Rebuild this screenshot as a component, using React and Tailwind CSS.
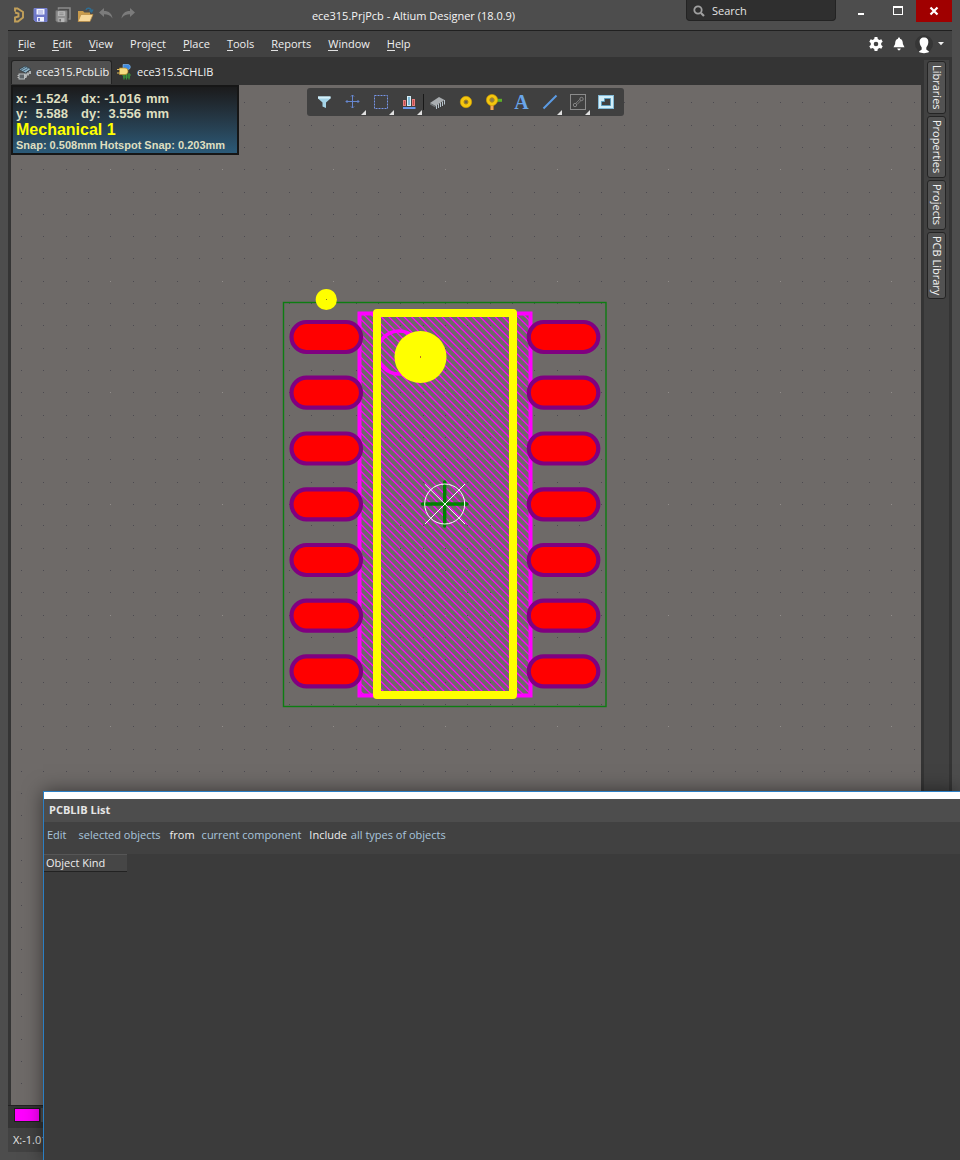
import React from "react";

const GRID = 22.32;
const ORIGIN_X = 445;
const ORIGIN_Y = 504;

const gridDots = [];
for (let r = -18; r <= 36; r++) {
  for (let c = -19; c <= 60; c++) {
    gridDots.push({
      x: Math.round(ORIGIN_X + c * GRID),
      y: Math.round(ORIGIN_Y + r * GRID) + (r > 0 ? -1 : 0),
      major: r % 5 === 0 && c % 5 === 0,
    });
  }
}

const hatchLines = [];
for (let i = 0; i < 76; i++) {
  const x = -346 + i * 7.6;
  hatchLines.push(`M${(x + 312).toFixed(1)} 312 L${(x + 697).toFixed(1)} 697`);
}

const padRows = [337, 392.7, 448.5, 504.3, 560, 615.7, 671.3];

function Footprint() {
  return (
    <svg className="block h-full w-full" role="img" aria-label="Footprint">
      <defs>
        <clipPath id="body">
          <rect x="359.5" y="313.5" width="171" height="382" />
        </clipPath>
      </defs>
      <g transform="translate(-11 -85)">
        <path d={hatchLines.join(" ")} clipPath="url(#body)" stroke="#ff00ff" strokeWidth="1.3" />
        <rect x="359.5" y="313.5" width="171" height="382" fill="none" stroke="#ff00ff" strokeWidth="4" />
        <circle cx="399" cy="352.5" r="21.5" fill="none" stroke="#ff00ff" strokeWidth="3.5" />
        <g shapeRendering="crispEdges">
          {gridDots.map((d) => (
            <rect key={d.x + "-" + d.y} x={d.x} y={d.y} width="1" height="1" fill={d.major ? "#918d8a" : "#4c4a50"} />
          ))}
        </g>
        <rect x="283.5" y="302.5" width="322.5" height="404" fill="none" stroke="#0d7d12" strokeWidth="1.4" />
        {padRows.map((y) => (
          <g key={y} fill="#ff0000" stroke="#800080" strokeWidth="4.2">
            <rect x="291.5" y={y - 15} width="69.5" height="30" rx="15" />
            <rect x="528.800" y={y - 15} width="69.5" height="30" rx="15" />
          </g>
        ))}
        <rect x="377" y="313" width="136" height="382" fill="none" stroke="#ffff00" strokeWidth="8" strokeLinejoin="round" />
        <circle cx="420.5" cy="357" r="26" fill="#ffff00" />
        <rect x="420" y="356" width="1" height="2" fill="#c07020" />
        <circle cx="326.3" cy="299.5" r="10.6" fill="#ffff00" />
        <rect x="326" y="299" width="1" height="1" fill="#807020" />
        <path d="M422.5 504 H467 M444.7 482 V526" stroke="#008000" strokeWidth="3.4" strokeLinecap="round" />
        <g fill="none" stroke="#ffffff" strokeWidth="1">
          <circle cx="444.7" cy="504" r="20" />
          <path d="M425 484.300 L465 524 M465 484 L425 524" />
        </g>
      </g>
    </svg>
  );
}

const menus = [
  ["", "F", "ile"],
  ["", "E", "dit"],
  ["", "V", "iew"],
  ["Proje", "c", "t"],
  ["", "P", "lace"],
  ["", "T", "ools"],
  ["", "R", "eports"],
  ["", "W", "indow"],
  ["", "H", "elp"],
];

function Floppy({ body, edge, label }) {
  return (
    <g>
      <path d="M1 1.500 H14 V14.500 H2.500 L1 13 Z" fill={body} stroke={edge} />
      <rect x="3.500" y="2" width="8" height="5.500" fill={label} />
      <path d="M5 4 H10 M5 6 H10" stroke={edge} strokeWidth=".7" />
      <rect x="4" y="10" width="7" height="4.500" fill={label} />
      <rect x="5" y="11" width="2" height="3" fill={edge} />
    </g>
  );
}

const quick = [
  {
    label: "DXP",
    icon: (
      <path d="M4 4.500 V1.500 H6.500 L12 5 V10.500 L7 14.500 H4 V10.500 L7.500 9.500 V6.500 L4 5.500" fill="none" stroke="#c2a05a" strokeWidth="1.900" />
    ),
  },
  { label: "Save", icon: <Floppy body="#6f78c9" edge="#7780cc" label="#f1f3ff" /> },
  {
    label: "Save All",
    icon: (
      <g>
        <path d="M3.500 2.500 V1 H15 V12 H13.500" fill="none" stroke="#8a8a8a" strokeWidth="1.500" />
        <g transform="translate(0 2.500) scale(.86)"><Floppy body="#909090" edge="#707070" label="#b8b8b8" /></g>
      </g>
    ),
  },
  {
    label: "Open",
    icon: (
      <g>
        <path d="M1 14 V4 H6 L7.500 5.500 H13 V14 Z" fill="#c99b4c" />
        <path d="M1 14.500 L4 7.500 H16 L13 14.500 Z" fill="#f6d79a" stroke="#b98b42" strokeWidth=".7" />
        <path d="M9 3 C10 0 14 1 14.500 4 M12.500 3.500 L14.600 5 L16 2.500" fill="none" stroke="#2f6d93" strokeWidth="1.400" />
      </g>
    ),
  },
  {
    label: "Undo",
    icon: <path d="M0 5.500 L5 1 V4 C10 4 13 6.500 13.500 11.500 C11.500 8.500 9 7.300 5 7.300 V10 Z" fill="#7b7b7b" />,
  },
  {
    label: "Redo",
    icon: <path d="M14 5.500 L9 1 V4 C4 4 1 6.500 .5 11.500 C2.500 8.500 5 7.300 9 7.300 V10 Z" fill="#7b7b7b" />,
  },
];

const tools = [
  {
    label: "Filter",
    icon: <g><path d="M1 2.500 H13.500 V4.500 L9 8.500 V14 L5.500 12.500 V8.500 L1 4.500 Z" fill="#a5d4e8" /><path d="M1 2.500 H13.500 V4.500 H1 Z" fill="#d4f0fa" /></g>,
  },
  {
    label: "Snap",
    more: true,
    icon: <path d="M7.500 1 V14 M1 7.500 H14 M6 2.500 L7.500 1 L9 2.500 M6 12.500 L7.500 14 L9 12.500 M2.500 6 L1 7.500 L2.500 9 M12.500 6 L14 7.500 L12.500 9" fill="none" stroke="#6787d0" strokeWidth="1" />,
  },
  {
    label: "Select",
    more: true,
    icon: <rect x="1.500" y="1.500" width="13" height="13" fill="none" stroke="#7795e6" strokeDasharray="2 1" strokeWidth="1" />,
  },
  {
    label: "Align",
    more: true,
    icon: (
      <g>
        <rect x="2.500" y="6.500" width="2" height="5" fill="#c54a4a" stroke="#e57f7f" strokeWidth="1" />
        <rect x="6.500" y="2.500" width="3" height="9" fill="#7fb9d6" stroke="#d7eff8" strokeWidth="1" />
        <rect x="11.500" y="5.500" width="2" height="6" fill="#c54a4a" stroke="#e57f7f" strokeWidth="1" />
        <path d="M2 14 H14.500" stroke="#6b98ea" strokeWidth="2" />
      </g>
    ),
  },
  {
    label: "Component",
    icon: (
      <g>
        <path d="M1 9 L10 3 L15.500 6 L6.500 12 Z" fill="#a9adb0" />
        <path d="M1 9 L6.500 12 V13.500 L1 10.500 Z" fill="#74787b" />
        <path d="M7.500 11 V15 M9.500 10 V14 M11.500 8.500 V13 M13.500 7.500 V12 M15.500 6 V10.500" stroke="#b7c3cb" strokeWidth="1" />
      </g>
    ),
  },
  {
    label: "Pad",
    icon: <g><circle cx="9" cy="8" r="5.700" fill="#f5c70e" stroke="#d3a000" strokeWidth=".6" /><circle cx="9" cy="8" r="2" fill="#6b6048" stroke="#a88417" /></g>,
  },
  {
    label: "Via",
    icon: (
      <g>
        <path d="M7 8 V16" stroke="#e48b28" strokeWidth="3.400" />
        <path d="M7 9 V16" stroke="#f7c489" strokeWidth="1" />
        <path d="M10 6.300 H17" stroke="#5eb026" strokeWidth="3" />
        <circle cx="7" cy="6" r="5.600" fill="#f5c70e" stroke="#d3a000" strokeWidth=".6" />
        <circle cx="7" cy="6" r="2.200" fill="#8c7b4c" stroke="#b08c1c" />
      </g>
    ),
  },
  { label: "String", glyph: "A" },
  { label: "Line", more: true, icon: <path d="M2.500 14.500 L15.500 1.500" stroke="#5b9be4" strokeWidth="2" /> },
  {
    label: "Dimension",
    more: true,
    icon: (
      <g fill="none" stroke="#8b8b8b" transform="translate(1 0)">
        <rect x=".5" y=".5" width="15" height="15" />
        <circle cx="5" cy="11" r="1.700" strokeWidth=".9" />
        <circle cx="11.500" cy="5" r="1.700" strokeWidth=".9" />
        <path d="M5.800 9.300 L9.800 5.300 M7 10.500 L11 6.500" strokeWidth=".8" />
      </g>
    ),
  },
  {
    label: "Region",
    icon: (
      <g transform="translate(1 0)">
        <rect x="0" y="1" width="16" height="14" fill="#d2effa" />
        <rect x="0.500" y="1.500" width="15" height="13" fill="none" stroke="#82b9d6" />
        <path d="M3.500 11.500 V7.500 H6.500 V4.500 H12.500 V11.500 Z" fill="#404040" stroke="#5c9dbf" />
      </g>
    ),
  },
];

const panels = [
  { name: "Libraries", h: "h-[53px]" },
  { name: "Properties", h: "h-[62px]" },
  { name: "Projects", h: "h-[50px]" },
  { name: "PCB Library", h: "h-[67px]" },
];

function TitleBar() {
  return (
    <header className="flex h-[30px] shrink-0 items-start pr-2 pl-[11px]">
      <div className="flex h-[30px] items-center gap-[6px]">
        {quick.map((q) => (
          <button key={q.label} aria-label={q.label} className="h-4 w-4">
            <svg viewBox="0 0 16 16" className="h-4 w-4 overflow-visible">{q.icon}</svg>
          </button>
        ))}
      </div>
      <h1 className="flex-1 pt-1.5 pl-1 text-center text-[11px] leading-5 text-[#f5f5f5]">ece315.PrjPcb - Altium Designer (18.0.9)</h1>
      <label className="flex h-[21px] w-[150px] items-center gap-[7px] rounded-b-[4px] border border-t-0 border-[#232323] bg-[#2f2f2f] pt-px pl-[6px]">
        <svg viewBox="0 0 12 12" className="h-3 w-3 shrink-0">
          <circle cx="5" cy="5" r="3.700" fill="none" stroke="#a0a0a0" strokeWidth="1.800" />
          <path d="M8 8 L11 11" stroke="#a0a0a0" strokeWidth="2.200" />
        </svg>
        <input aria-label="Search" placeholder="Search" className="w-full min-w-0 bg-transparent text-[11px] leading-4 text-white outline-none placeholder:text-[#e4e4e4]" />
      </label>
      <div className="ml-[7px] flex">
        <button aria-label="Minimize" className="flex h-[22px] w-9 items-center justify-center">
          <svg viewBox="0 0 12 12" className="h-3 w-3"><rect x="3" y="8" width="6" height="2" fill="#fff" /></svg>
        </button>
        <button aria-label="Maximize" className="flex h-[22px] w-[37px] items-center justify-center">
          <svg viewBox="0 0 12 12" className="h-3 w-3" shapeRendering="crispEdges"><path d="M1 1 H11 V10 H1 Z M2 3 V9 H10 V3 Z" fill="#fff" fillRule="evenodd" /></svg>
        </button>
        <button aria-label="Close" className="flex h-[22px] w-9 items-center justify-center bg-[#a00000]">
          <svg viewBox="0 0 12 12" className="h-3 w-3"><path d="M2.500 2.500 L9.500 9.500 M9.500 2.500 L2.500 9.500" stroke="#fff" strokeWidth="2.200" /></svg>
        </button>
      </div>
    </header>
  );
}

function MenuBar() {
  return (
    <nav className="flex h-[27px] shrink-0 items-center border-t border-[#202020] bg-[#424242] pr-2 pl-[10px]">
      <div className="flex flex-1 gap-[17px] text-[11px] leading-4 text-[#f0f0f0]">
        {menus.map(([a, b, c]) => (
          <button key={a + b + c}>{a}<span className="inline-block border-b border-[#e0e0e0] leading-[13px]">{b}</span>{c}</button>
        ))}
      </div>
      <div className="flex items-center">
        <button aria-label="Settings" className="mr-[9px]">
          <svg viewBox="0 0 14 14" className="h-[14px] w-[14px]">
            <path d="M5.600 0 H8.400 L8.800 2 L10.400 2.900 L12.300 2.200 L13.700 4.700 L12.200 6 V8 L13.700 9.300 L12.300 11.800 L10.400 11.100 L8.800 12 L8.400 14 H5.600 L5.200 12 L3.600 11.100 L1.700 11.800 L.3 9.300 L1.800 8 V6 L.3 4.700 L1.700 2.200 L3.600 2.900 L5.200 2 Z M7 4.700 A2.300 2.300 0 1 0 7 9.300 A2.300 2.300 0 1 0 7 4.700 Z" fill="#fff" fillRule="evenodd" />
          </svg>
        </button>
        <button aria-label="Notifications" className="mr-[9px]">
          <svg viewBox="0 0 14 14" className="h-[14px] w-[14px]">
            <path d="M7 .5 C7.800 .5 8 1 8 1.700 C10.500 2.500 10.800 4.500 10.900 7 L12.500 10.300 H1.500 L3.100 7 C3.200 4.500 3.500 2.500 6 1.700 C6 1 6.200 .5 7 .5 Z M5.200 11.500 H8.800 L7.900 13.300 H6.100 Z" fill="#fff" />
          </svg>
        </button>
        <button aria-label="Account" className="flex items-center gap-[5px]">
          <svg viewBox="0 0 18 18" className="h-[18px] w-[18px] overflow-visible">
            <circle cx="9" cy="9" r="9" fill="#363636" />
            <path transform="translate(.5 0)" d="M8.500 2.500 C11.500 2.500 13.200 4.500 12.800 7.500 C12.600 10 11.500 11 10.800 12.500 V14.500 C12 15.500 13.500 15.800 13.500 17 C11 18.500 6 18.500 3.500 17 C3.500 15.800 5 15.500 6.200 14.500 V12.500 C5.500 11 4.400 10 4.200 7.500 C3.800 4.500 5.500 2.500 8.500 2.500 Z" fill="#fff" />
          </svg>
          <svg viewBox="0 0 6 4" className="h-1 w-[6px]"><path d="M0 0 H6 L3 3.300 Z" fill="#f0f0f0" /></svg>
        </button>
      </div>
    </nav>
  );
}

function DocumentTabs() {
  return (
    <div role="tablist" className="flex h-7 shrink-0 items-end pl-[3px] text-[11px] text-[#f2f2f2]">
      <button role="tab" aria-selected="true" className="mb-px flex h-6 w-[101px] items-center gap-[3px] rounded-t-[3px] border border-b-0 border-[#232323] bg-[#505050] pl-[5px]">
        <svg viewBox="0 0 16 16" className="h-4 w-4 shrink-0">
          <path d="M2 4.500 L8 1 L14 4 L8.500 8 Z" fill="#8fb4c8" stroke="#2c3a42" strokeWidth=".8" />
          <path d="M4 5 L9.500 2 M6 6.300 L11.500 3.200" stroke="#466274" />
          <path d="M9 8.500 V12 M11 7.500 V10.500 M13 6 V9" stroke="#e8eef1" strokeWidth="1.200" fill="none" />
          <rect x="2" y="9" width="5.500" height="5" fill="#5e6468" stroke="#c3c9cc" strokeWidth=".9" />
          <path d="M.5 10.500 H2 M.5 12.500 H2 M8 10.500 H9.500 M8 12.500 H9.500" stroke="#bbb" />
        </svg>
        <span>ece315.PcbLib</span>
      </button>
      <button role="tab" aria-selected="false" className="mb-px flex h-6 items-center gap-1 pl-[5px]">
        <svg viewBox="0 0 16 16" className="h-4 w-4 shrink-0">
          <path d="M6 .5 H11 C14 .5 14 5.500 11 5.500 H6 Z" fill="#3e8be0" stroke="#8dc3f5" strokeWidth=".6" />
          <path d="M5 11 H14 M6 13 H13 M7 9.500 V15.500 M9.500 9 V15.500 M12 9 V15.500" stroke="#39963b" strokeWidth="1.200" />
          <path d="M2.500 4 H8 C12 4 12 10.500 8 10.500 H2.500 Z" fill="#f6dc80" stroke="#b78a28" strokeWidth=".7" />
          <path d="M0 5.500 H3 M0 9 H3" stroke="#d8b65a" />
        </svg>
        <span>ece315.SCHLIB</span>
      </button>
    </div>
  );
}

function HeadsUp() {
  return (
    <div className="absolute top-0 left-0 h-[70px] w-[228px] border-2 border-[#161616] bg-gradient-to-b from-[#1b1b1c] to-[#2b5a78] pt-1 pl-[3px] font-['Liberation_Sans',Arial,sans-serif] font-bold text-[#dfdfc0]">
      <div className="grid grid-cols-[14px_38px_32px_41px_auto] text-[13px] leading-[15px]">
        <span>x:</span>
        <span className="text-right">-1.524</span>
        <span className="pl-[13px]">dx:</span>
        <span className="text-right">-1.016</span>
        <span className="pl-[5px]">mm</span>
        <span>y:</span>
        <span className="text-right">5.588</span>
        <span className="pl-[13px]">dy:</span>
        <span className="text-right">3.556</span>
        <span className="pl-[5px]">mm</span>
      </div>
      <div className="text-[16px] leading-[17px] text-[#ffff00]">Mechanical 1</div>
      <div className="text-[11px] leading-[14px] whitespace-nowrap">Snap: 0.508mm Hotspot Snap: 0.203mm</div>
    </div>
  );
}

function ActiveBar() {
  return (
    <div role="toolbar" className="absolute top-[3px] left-[296px] flex h-7 w-[317px] rounded-[3px] bg-[#404040] pl-1">
      {tools.map((t) => (
        <button key={t.label} aria-label={t.label} className="relative flex h-7 w-7 items-center justify-center">
          {t.label === "Component" && <span className="absolute top-[6px] left-0 h-4 w-px bg-[#181818]" />}
          {t.glyph ? (
            <span className="pl-px font-['Liberation_Serif',serif] text-[20px] leading-5 font-bold text-[#69a5ea]">{t.glyph}</span>
          ) : (
            <svg viewBox="0 0 16 16" className="h-4 w-4 overflow-visible">{t.icon}</svg>
          )}
          {t.more && (
            <svg viewBox="0 0 5 5" className="absolute right-px bottom-px h-[5px] w-[5px]"><path d="M5 0 V5 H0 Z" fill="#e0e0e0" /></svg>
          )}
        </button>
      ))}
    </div>
  );
}

function ListPanel() {
  return (
    <section className="absolute top-[791px] right-0 bottom-0 left-[43px] flex flex-col border-t border-l border-[#2b7fc4] bg-[#3b3b3b] text-[11px] shadow-[0_0_18px_rgba(0,0,0,0.5)]">
      <div className="h-[7px] shrink-0 bg-white" />
      <h2 className="h-[23px] shrink-0 bg-[#4d4d4d] pl-[5px] text-[11px] leading-[22px] font-bold text-[#e6e6e6]">PCBLIB List</h2>
      <div className="flex h-8 shrink-0 items-start bg-[#414141] pt-[5px] pl-[3px] leading-4 text-[#a9c6dd]">
        <a href="#edit" className="mr-3">Edit</a>
        <a href="#objects" className="mr-[9px]">selected objects</a>
        <span className="mr-[7px] text-[#eeeeee]">from</span>
        <a href="#scope" className="mr-2">current component</a>
        <span className="mr-1 text-[#eeeeee]">Include</span>
        <a href="#types">all types of objects</a>
      </div>
      <table className="w-[83px] border-collapse">
        <thead>
          <tr>
            <th className="h-[17px] border-t border-b border-t-[#565656] border-b-[#222222] bg-[#464646] pt-0 pb-px pl-[2px] text-left leading-[14px] font-normal text-[#eeeeee]">Object Kind</th>
          </tr>
        </thead>
      </table>
    </section>
  );
}

export default function App() {
  return (
    <div className="relative flex h-screen flex-col overflow-hidden bg-[#4d4d4d] font-['Open_Sans','Noto_Sans',sans-serif]">
      <TitleBar />
      <div className="mx-2 mb-2 flex min-h-0 flex-1 flex-col">
        <MenuBar />
        <div className="flex min-h-0 flex-1 bg-[#343434]">
          <div className="flex min-w-0 flex-1 flex-col">
            <DocumentTabs />
            <main className="relative ml-[3px] min-h-0 flex-1 overflow-hidden bg-[#6e6a68]">
              <Footprint />
              <HeadsUp />
              <ActiveBar />
            </main>
            <div className="flex h-[23px] shrink-0 items-start gap-px border-t border-[#222222] pt-[2px] pl-[6px]">
              <button aria-label="Mechanical 1 layer" className="h-[14px] w-[26px] border border-[#1d1d1d] bg-[#ff00ff]" />
              <div className="h-[14px] flex-1 bg-[#505050]" />
            </div>
          </div>
          <aside className="flex w-[31px] shrink-0 px-[3px] pt-[3px]">
            <div className="flex w-full flex-col items-start gap-[2px] bg-[#414141] pt-px pl-[3px]">
              {panels.map((p) => (
                <button key={p.name} className={"flex w-[19px] items-center justify-center rounded-[3px] border border-[#242424] bg-[#525252] text-[11px] leading-4 whitespace-nowrap text-[#f2f2f2] [writing-mode:vertical-rl] " + p.h}>
                  {p.name}
                </button>
              ))}
            </div>
          </aside>
        </div>
        <footer className="h-6 shrink-0 bg-[#424242] pl-[5px] text-[11px] leading-6 text-[#e8e8e8]">X:-1.016mm Y:5.588mm</footer>
      </div>
      <ListPanel />
    </div>
  );
}
